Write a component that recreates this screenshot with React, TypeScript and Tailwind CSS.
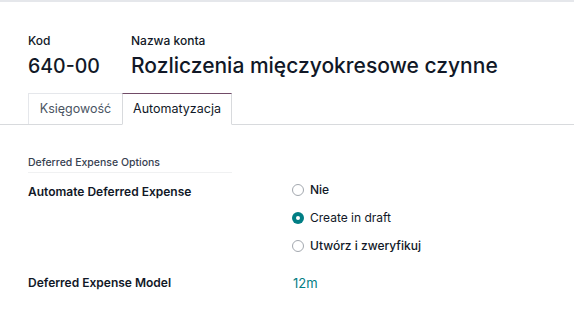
import React from 'react';

function Radio({ checked, label }: { checked?: boolean; label: string }) {
  return (
    <div className="flex items-center gap-[6px] h-[20px]">
      {checked ? (
        <span className="w-[12px] h-[12px] rounded-full bg-[#017e84] flex items-center justify-center">
          <span className="w-[4px] h-[4px] rounded-full bg-white" />
        </span>
      ) : (
        <span className="w-[12px] h-[12px] rounded-full border border-[#a3a8af] bg-white" />
      )}
      <span className={`text-[12px] text-[#111827] ${checked ? '' : 'font-medium'}`}>{label}</span>
    </div>
  );
}

export default function App() {
  return (
    <div className="w-[574px] h-[328px] bg-white overflow-hidden" style={{ fontFamily: 'Inter, "Noto Sans", sans-serif' }}>
      <div className="h-[2px] bg-[#e5e7eb]" />
      <div className="px-[28px] pt-[32px]">
        <div className="flex">
          <div className="w-[103px]">
            <div className="text-[12px] font-medium text-[#111827] leading-[14px]">Kod</div>
            <div className="text-[19.5px] font-medium text-[#111827] leading-[26px] mt-[5px]">640-00</div>
          </div>
          <div>
            <div className="text-[12px] font-medium text-[#111827] leading-[14px]">Nazwa konta</div>
            <div className="text-[21px] font-medium text-[#111827] leading-[26px] mt-[5px]">Rozliczenia mięczyokresowe czynne</div>
          </div>
        </div>
      </div>
      <div className="mt-[14px] flex border-b border-[#d8dadd] px-[28px]">
        <div className="h-[31px] w-[94px] flex items-center justify-center text-[12.5px] text-[#4b5563] border border-b-0 border-[#e5e7eb] border-r-0 -mb-px bg-white">Księgowość</div>
        <div className="h-[32px] w-[110px] flex items-center justify-center text-[12.5px] text-[#111827] border border-[#d8dadd] border-t-[#714b67] border-b-white -mb-px bg-white">Automatyzacja</div>
      </div>
      <div className="px-[28px] pt-[31px]">
        <div className="w-[204px] text-[10.5px] leading-[13px] font-medium text-[#374151] pb-[3px] border-b border-[#f0f1f2]">Deferred Expense Options</div>
        <div className="flex items-start mt-[7px]">
          <div className="w-[264px] mt-[4px] text-[12px] font-semibold text-[#111827] leading-[16px]">Automate Deferred Expense</div>
          <div className="flex flex-col gap-[8px]">
            <Radio label="Nie" />
            <Radio checked label="Create in draft" />
            <Radio label="Utwórz i zweryfikuj" />
          </div>
        </div>
        <div className="flex mt-[19px]">
          <div className="w-[265px] text-[12px] font-semibold text-[#111827] leading-[16px]">Deferred Expense Model</div>
          <div className="text-[13px] text-[#017e84] leading-[16px]">12m</div>
        </div>
      </div>
    </div>
  );
}
